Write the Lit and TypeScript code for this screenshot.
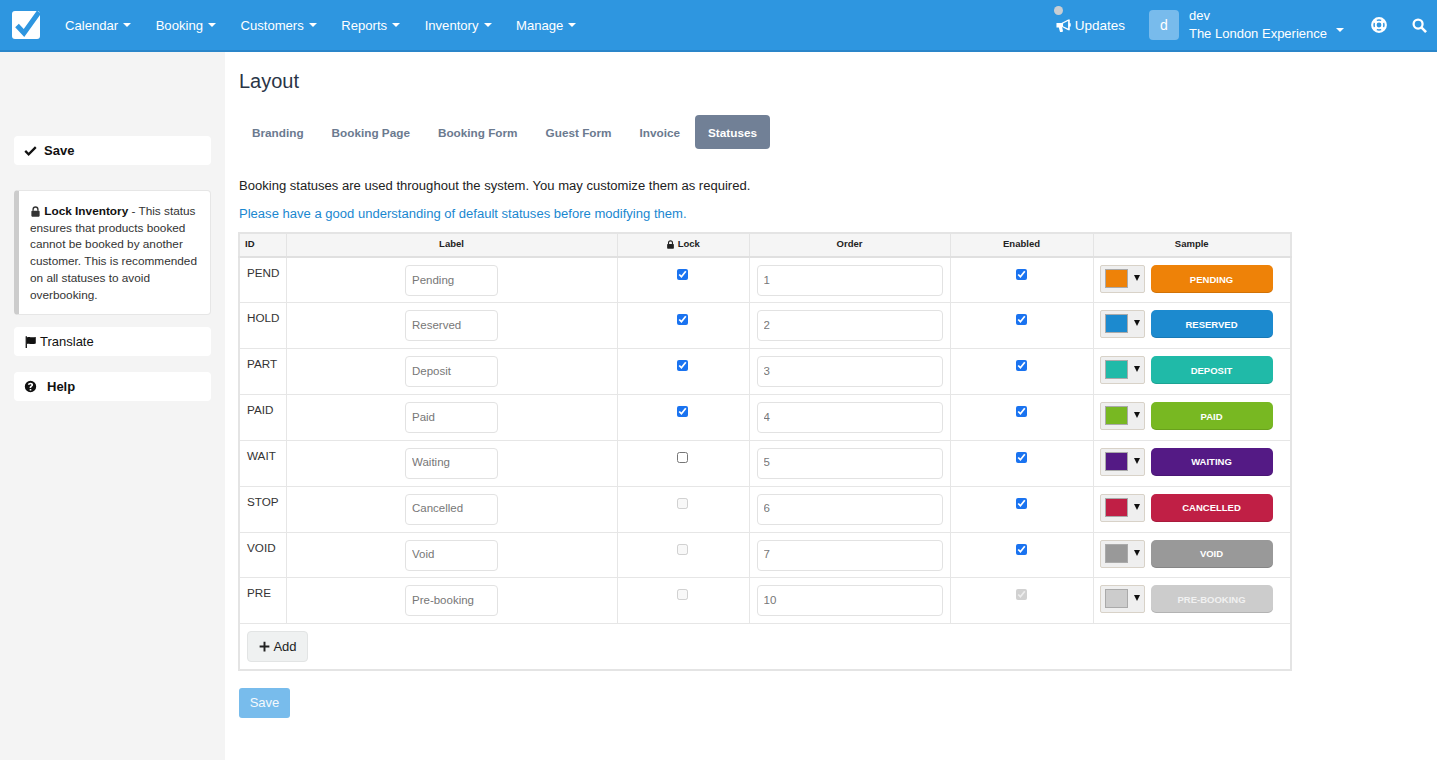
import { LitElement, html, css, svg } from "lit";
import { customElement } from "lit/decorators.js";

const caret = html`<span class="caret"></span>`;

const icons = {
  check: svg`<path d="M1.500 8.500l4.200 4.200L14.500 3.800" fill="none" stroke="currentColor" stroke-width="2.800"/>`,
  lock: svg`<path d="M4.500 7V5a3.500 3.500 0 0 1 7 0v2" fill="none" stroke="currentColor" stroke-width="2"/><rect x="2" y="7" width="12" height="8.500" rx="1.200" fill="currentColor"/>`,
  flag: svg`<path d="M2 1.500h1.600V16H2z" fill="currentColor"/><path d="M3.600 3c3-1.600 5 .9 10.900-.6v8c-5 2-8-.8-10.900.8z" fill="currentColor"/>`,
  help: svg`<path fill-rule="evenodd" fill="currentColor" d="M8 1a7 7 0 1 1 0 14A7 7 0 0 1 8 1zM8 3.300c-1.700 0-2.900.9-3.300 2.300l1.700.7c.2-.7.7-1.200 1.500-1.200.7 0 1.200.4 1.200.9 0 .5-.4.800-1 1.200-.8.500-1.200 1-1.200 2v.5h2v-.3c0-.5.2-.7.800-1.100.8-.5 1.500-1.200 1.500-2.400 0-1.500-1.300-2.600-3.200-2.600zM7 11v2h2v-2z"/>`,
  plus: svg`<path d="M8 2v12M2 8h12" stroke="currentColor" stroke-width="2.400" fill="none"/>`,
  horn: svg`<path fill="currentColor" fill-rule="evenodd" d="M.5 5.200h5.300L13 1.500h1.700v4h1v3.500h-1v4H13L6.500 9.700l1 4.300-1 .8H4.300L3 10H.5zM7.500 5.900v3l5.400 2.200V3.300z"/>`,
  ring: svg`<circle cx="8" cy="8" r="6.800" fill="none" stroke="currentColor" stroke-width="2.200"/><circle cx="8" cy="8" r="3.300" fill="none" stroke="currentColor" stroke-width="1.800"/><path d="M3.200 3.200l2.500 2.500M12.800 3.200l-2.500 2.500M3.200 12.800l2.500-2.500M12.800 12.800l-2.500-2.500" stroke="currentColor" stroke-width="3.400"/>`,
  search: svg`<circle cx="6.500" cy="6.500" r="4.800" fill="none" stroke="currentColor" stroke-width="2.400"/><path d="M10 10l5 5" stroke="currentColor" stroke-width="2.800"/>`,
};

const icon = (name: keyof typeof icons, size = 14) =>
  html`<svg class="icon" width=${size} height=${size} viewBox="0 0 16 16">${icons[name]}</svg>`;

const statuses = [
  { id: "PEND", label: "Pending", order: "1", lock: true, lockOff: false, enabledOff: false, color: "#ee8208", text: "#fff" },
  { id: "HOLD", label: "Reserved", order: "2", lock: true, lockOff: false, enabledOff: false, color: "#1c8acf", text: "#fff" },
  { id: "PART", label: "Deposit", order: "3", lock: true, lockOff: false, enabledOff: false, color: "#20baa8", text: "#fff" },
  { id: "PAID", label: "Paid", order: "4", lock: true, lockOff: false, enabledOff: false, color: "#78b822", text: "#fff" },
  { id: "WAIT", label: "Waiting", order: "5", lock: false, lockOff: false, enabledOff: false, color: "#541a85", text: "#fff" },
  { id: "STOP", label: "Cancelled", order: "6", lock: false, lockOff: true, enabledOff: false, color: "#c01f45", text: "#fff" },
  { id: "VOID", label: "Void", order: "7", lock: false, lockOff: true, enabledOff: false, color: "#999999", text: "#fff" },
  { id: "PRE", label: "Pre-booking", order: "10", lock: false, lockOff: true, enabledOff: true, color: "#cccccc", text: "#f1f1f1" },
];

@customElement("app-root")
export class AppRoot extends LitElement {
  static styles = css`
    :host {
      display: block;
      min-height: 760px;
      font-family: "Liberation Sans", Arial, sans-serif;
      font-size: 13px;
      color: #222;
      background: #fff;
    }
    * { box-sizing: border-box; }
    .icon { flex: none; display: inline-block; vertical-align: -2px; }

    .nav {
      height: 52px;
      background: #2e96e0;
      border-bottom: 2px solid #2a86ca;
      color: #fff;
      display: flex;
      align-items: center;
      padding: 0 10px 0 12px;
      font-size: 13.100px;
    }
    .logo { width: 28px; height: 28px; margin-right: 25px; flex: none; }
    .menu { display: flex; gap: 24.500px; }
    .menu span { display: flex; align-items: center; white-space: nowrap; }
    .caret {
      display: inline-block;
      margin-left: 5px;
      border-left: 4px solid transparent;
      border-right: 4px solid transparent;
      border-top: 4px solid #fff;
    }
    .right { margin-left: auto; display: flex; align-items: center; }
    .updates {
      position: relative;
      display: flex;
      align-items: center;
      gap: 4px;
      margin-right: 24px;
      font-size: 13.500px;
    }
    .dot {
      position: absolute;
      left: -2px;
      top: -12px;
      width: 9px;
      height: 9px;
      border-radius: 50%;
      background: #c9ced3;
    }
    .avatar {
      width: 30px;
      height: 30px;
      border-radius: 4px;
      background: #78bbec;
      display: flex;
      align-items: center;
      justify-content: center;
      font-size: 14px;
      margin-right: 10px;
    }
    .account { line-height: 18px; margin-top: -1px; white-space: nowrap; font-size: 13px; }
    .account .caret { margin: 0 0 7px 9px; }
    .acc-row { display: flex; align-items: center; }
    .ring { margin: 0 25px 0 27px; display: flex; }
    .search { display: flex; }

    .page { display: flex; min-height: 708px; }
    .side {
      width: 225px;
      flex: none;
      background: #f4f4f4;
      padding: 84px 14px 0 14px;
      display: flex;
      flex-direction: column;
    }
    .box {
      background: #fff;
      border-radius: 4px;
      height: 29px;
      display: flex;
      align-items: center;
      padding: 0 10px;
      color: #111;
    }
    .box.strong { font-weight: bold; }
    .save-box { gap: 7px; margin-bottom: 25px; }
    .help-box { gap: 10px; margin-top: 16px; }
    .trans-box { gap: 3px; }
    .note {
      background: #fff;
      border: 1px solid #e6e6e6;
      border-left: 5px solid #ccc;
      border-radius: 4px;
      height: 125px;
      padding: 12px 4px 0 11px;
      line-height: 16.700px;
      font-size: 11.800px;
      color: #333;
      margin-bottom: 12px;
    }
    .note b { color: #111; }

    .main { flex: 1; padding: 0 0 0 14px; }
    h1 {
      margin: 18px 0 22px;
      font-size: 20px;
      line-height: 23px;
      font-weight: normal;
      color: #2a3547;
    }
    .tabs { display: flex; gap: 2px; margin-bottom: 28px; }
    .tab {
      height: 34px;
      display: flex;
      align-items: center;
      padding: 0 13px;
      font-size: 11.750px;
      font-weight: bold;
      color: #6b7a8f;
      border-radius: 4px;
    }
    .tab.on { background: #718096; color: #fff; }
    p { margin: 0; font-size: 13.050px; line-height: 18px; }
    .intro { margin-bottom: 10px; color: #222; }
    .link { color: #1a87d0; margin-bottom: 9px; }

    table {
      border-collapse: collapse;
      table-layout: fixed;
      width: 1053px;
      margin-left: -1px;
      border: 2px solid #e4e4e4;
    }
    th {
      height: 24px;
      background: #f5f5f5;
      border: 1px solid #e4e4e4;
      border-bottom: 2px solid #e0e0e0;
      font-size: 9.500px;
      font-weight: bold;
      color: #222;
      padding: 0 0 4px;
      text-align: center;
    }
    th:first-child { text-align: left; padding-left: 5px; }
    td {
      height: 45.850px;
      border: 1px solid #e6e6e6;
      padding: 7px 7px 0;
      vertical-align: top;
      text-align: center;
    }
    td.code { text-align: left; font-size: 11.700px; padding: 8px 7px 0; color: #333; }
    td.tick { padding-top: 8px; }
    td.lock { padding-right: 9px; }
    td.last { padding-left: 6px; }
    input[type="text"] {
      display: block;
      height: 31px;
      border: 1px solid #e2e2e2;
      border-radius: 4px;
      padding: 0 6px 2px;
      font: 11.500px "Liberation Sans", Arial, sans-serif;
      color: #777;
      background: transparent;
      outline: none;
    }
    .label { width: 93px; margin: 0 auto; }
    .order { width: 100%; }
    input[type="checkbox"] {
      width: 11px;
      height: 11px;
      margin: 3px 0 0;
      accent-color: #1a73f0;
    }
    .sample { display: flex; gap: 6px; }
    .picker {
      width: 45px;
      height: 28px;
      background: #efefef;
      border: 1px solid #d8d2c8;
      border-radius: 2px;
      display: flex;
      align-items: center;
      padding: 0 0 1px 4px;
    }
    .swatch {
      width: 23px;
      height: 19px;
      border: 1px solid #aaa;
      margin-right: 6px;
    }
    .arrow {
      border-left: 3px solid transparent;
      border-right: 3px solid transparent;
      border-top: 6px solid #111;
      margin-bottom: 1px;
    }
    .sample-btn {
      width: 122px;
      height: 28px;
      border-radius: 5px;
      display: flex;
      align-items: center;
      justify-content: center;
      font-size: 9.500px;
      font-weight: bold;
      box-shadow: inset 0 -1px 0 rgba(0,0,0,.12);
    }
    td.add { text-align: left; padding: 7px 7px 0; }
    .add-btn {
      display: inline-flex;
      align-items: center;
      gap: 2px;
      width: 61px;
      height: 31px;
      justify-content: center;
      background: #eff1f1;
      border: 1px solid #e2e4e4;
      border-radius: 4px;
      font-size: 13px;
      color: #222;
    }
    .save-btn {
      margin-top: 17px;
      width: 51px;
      height: 30px;
      border-radius: 3px;
      background: #78bcec;
      color: #f4f9fd;
      display: flex;
      align-items: center;
      justify-content: center;
      font-size: 13px;
    }
  `;

  render() {
    return html`
      <div class="nav">
        <svg class="logo" viewBox="0 0 28 28">
          <rect width="28" height="28" rx="3" fill="#fff" />
          <path d="M5 14.500l7 7.500L27 1" fill="none" stroke="#2e96e0" stroke-width="5" />
        </svg>
        <div class="menu">
          ${["Calendar", "Booking", "Customers", "Reports", "Inventory", "Manage"].map(
            (m) => html`<span>${m}${caret}</span>`
          )}
        </div>
        <div class="right">
          <div class="updates"><i class="dot"></i>${icon("horn", 15)}<span>Updates</span></div>
          <div class="avatar">d</div>
          <div class="account">
            <div>dev</div>
            <div class="acc-row">The London Experience ${caret}</div>
          </div>
          <span class="ring">${icon("ring", 16)}</span>
          <span class="search">${icon("search", 15)}</span>
        </div>
      </div>
      <div class="page">
        <div class="side">
          <div class="box strong save-box">${icon("check", 13)}<span>Save</span></div>
          <div class="note">
            ${icon("lock", 11)} <b>Lock Inventory</b> - This status ensures that products booked
            cannot be booked by another customer. This is recommended on all statuses to avoid
            overbooking.
          </div>
          <div class="box trans-box">${icon("flag", 13)}<span>Translate</span></div>
          <div class="box strong help-box">${icon("help", 13)}<span>Help</span></div>
        </div>
        <div class="main">
          <h1>Layout</h1>
          <div class="tabs">
            ${["Branding", "Booking Page", "Booking Form", "Guest Form", "Invoice"].map(
              (t) => html`<div class="tab">${t}</div>`
            )}
            <div class="tab on">Statuses</div>
          </div>
          <p class="intro">Booking statuses are used throughout the system. You may customize them as required.</p>
          <p class="link">Please have a good understanding of default statuses before modifying them.</p>
          <table>
            <colgroup>
              <col style="width:47px" /><col style="width:331px" /><col style="width:132px" />
              <col style="width:201px" /><col style="width:143px" /><col style="width:198px" />
            </colgroup>
            <thead>
              <tr>
                <th>ID</th>
                <th>Label</th>
                <th>${icon("lock", 9)} Lock</th>
                <th>Order</th>
                <th>Enabled</th>
                <th>Sample</th>
              </tr>
            </thead>
            <tbody>
              ${statuses.map(
                (s) => html`<tr>
                  <td class="code">${s.id}</td>
                  <td><input class="label" type="text" .value=${s.label} /></td>
                  <td class="tick lock"><input type="checkbox" .checked=${s.lock} ?disabled=${s.lockOff} /></td>
                  <td><input class="order" type="text" .value=${s.order} /></td>
                  <td class="tick"><input type="checkbox" checked ?disabled=${s.enabledOff} /></td>
                  <td class="last">
                    <div class="sample">
                      <div class="picker">
                        <span class="swatch" style="background:${s.color}"></span>
                        <span class="arrow"></span>
                      </div>
                      <div class="sample-btn" style="background:${s.color};color:${s.text}">
                        ${s.label.toUpperCase()}
                      </div>
                    </div>
                  </td>
                </tr>`
              )}
              <tr>
                <td class="add" colspan="6">
                  <div class="add-btn">${icon("plus", 13)}Add</div>
                </td>
              </tr>
            </tbody>
          </table>
          <div class="save-btn">Save</div>
        </div>
      </div>
    `;
  }
}
